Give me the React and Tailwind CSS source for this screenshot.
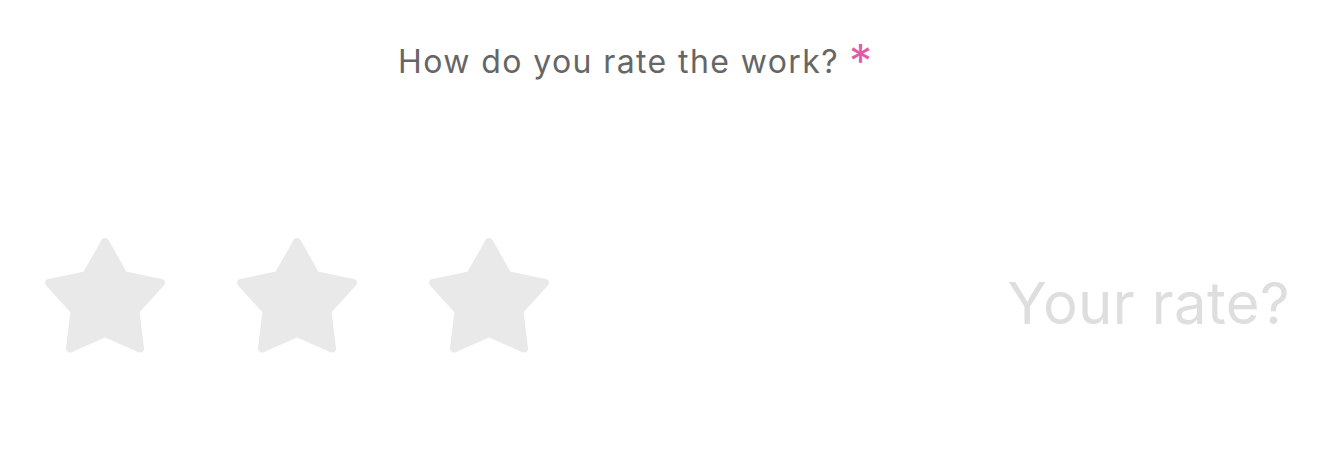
function Star() {
  return (
    <svg width="120" height="116" viewBox="0 0 120 116" className="shrink-0">
      <polygon
        points="60,4 78.81,37.11 116,44.9 90.43,72.89 95,110.5 60,95 25,110.5 29.57,72.89 4,44.9 41.19,37.11"
        fill="#e9e9e9"
        stroke="#e9e9e9"
        strokeWidth="8"
        strokeLinejoin="round"
      />
    </svg>
  );
}

export default function App() {
  return (
    <div className="h-[476px] w-full bg-white font-['Inter',sans-serif]">
      <div className="pt-[40px] pl-[398px] flex items-start">
        <span className="text-[32px] leading-[44px] text-[#666666] tracking-[1.4px]">How do you rate the work?</span>
        <span className="ml-[10px] -mt-[2px] text-[46px] leading-[46px] text-[#e35ba7]">*</span>
      </div>
      <div className="mt-[154px] flex items-center justify-between pl-[45px] pr-[48px]">
        <div className="flex gap-[72px]">
          <Star />
          <Star />
          <Star />
        </div>
        <span className="text-[58px] leading-none text-[#dedede] tracking-[0.4px] mt-[14px]">Your rate?</span>
      </div>
    </div>
  );
}
